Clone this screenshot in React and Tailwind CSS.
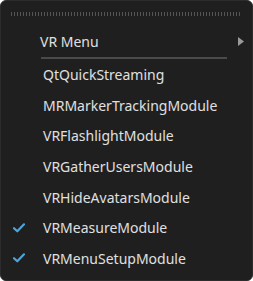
export default function App() {
  const items = [
    { label: "QtQuickStreaming", checked: false },
    { label: "MRMarkerTrackingModule", checked: false },
    { label: "VRFlashlightModule", checked: false },
    { label: "VRGatherUsersModule", checked: false },
    { label: "VRHideAvatarsModule", checked: false },
    { label: "VRMeasureModule", checked: true },
    { label: "VRMenuSetupModule", checked: true },
  ];
  return (
    <div
      className="w-[253px] h-[281px] bg-[#1f1f1f] border border-[#2c2c2c] rounded-[6px] text-[#e0e0e0] overflow-hidden flex flex-col"
      style={{ fontFamily: '"Noto Sans", "Open Sans", sans-serif' }}
    >
      <div className="mt-[11px] mx-[10px] h-[4px] bg-[linear-gradient(90deg,#555555_1px,transparent_1px)] bg-[length:3px_2px]" />
      <div className="mt-[10px] h-[30px] flex items-center pl-[39px] pr-[8px] text-[14px] justify-between">
        <span>VR Menu</span>
        <svg width="6" height="9" viewBox="0 0 6 9">
          <path d="M0 0 L6 4.5 L0 9 Z" fill="#9a9a9a" />
        </svg>
      </div>
      <div className="ml-[40px] w-[186px] h-[2px] bg-[#4a4a4a] mt-[1px]" />
      <div className="flex flex-col">
        {items.map((it) => (
          <div key={it.label} className="h-[30.7px] flex items-center text-[14px]">
            <div className="w-[42px] flex justify-center pr-[7px]">
              {it.checked && (
                <svg width="12" height="10" viewBox="0 0 12 10">
                  <path d="M1 5.2 L4.3 8.3 L11 1.3" fill="none" stroke="#4ba5de" strokeWidth="2.2" strokeLinecap="round" strokeLinejoin="round" />
                </svg>
              )}
            </div>
            <span>{it.label}</span>
          </div>
        ))}
      </div>
    </div>
  );
}
